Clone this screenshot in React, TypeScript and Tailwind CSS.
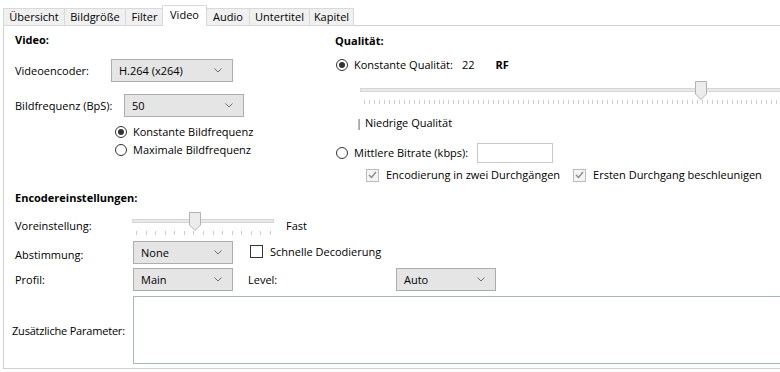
import React from 'react';

const tabs = [
  { label: 'Übersicht', w: 'w-[61px]' },
  { label: 'Bildgröße', w: 'w-[61px]' },
  { label: 'Filter', w: 'w-[38px]' },
  { label: 'Video', w: 'w-[45px]', active: true },
  { label: 'Audio', w: 'w-[43px]' },
  { label: 'Untertitel', w: 'w-[60px]' },
  { label: 'Kapitel', w: 'w-[45px]' },
];

function Chevron() {
  return (
    <svg width="8" height="5" viewBox="0 0 8 5" className="shrink-0">
      <path d="M0.5 0.5 L4 4 L7.5 0.5" fill="none" stroke="#6d6d6d" strokeWidth="1" />
    </svg>
  );
}

function Combo({ value, className }: { value: string; className: string }) {
  return (
    <div
      className={`flex h-[23px] items-center justify-between border border-[#adadad] bg-[#e5e5e5] pl-[7px] pr-[10px] ${className}`}
    >
      <span>{value}</span>
      <Chevron />
    </div>
  );
}

function Radio({ checked, label }: { checked?: boolean; label: string }) {
  return (
    <div className="flex items-center gap-[6px]">
      <span className="flex h-[12px] w-[12px] items-center justify-center rounded-full border border-[#333]">
        {checked && <span className="h-[6px] w-[6px] rounded-full bg-[#333]" />}
      </span>
      <span>{label}</span>
    </div>
  );
}

function Check({ checked, disabled, label }: { checked?: boolean; disabled?: boolean; label: string }) {
  return (
    <div className="flex items-center gap-[7px]">
      <span
        className={`flex h-[13px] w-[13px] items-center justify-center border ${
          disabled ? 'border-[#bcbcbc] bg-[#f4f4f4]' : 'border-[#333] bg-white'
        }`}
      >
        {checked && (
          <svg width="9" height="8" viewBox="0 0 9 8">
            <path d="M1 4 L3.5 6.5 L8 1" fill="none" stroke={disabled ? '#8a8a8a' : '#333'} strokeWidth="1.4" />
          </svg>
        )}
      </span>
      <span>{label}</span>
    </div>
  );
}

function Thumb() {
  return (
    <svg width="12" height="19" viewBox="0 0 12 19">
      <path d="M0.5 0.5 H11.5 V13 L6 18.5 L0.5 13 Z" fill="#ececec" stroke="#b3b3b3" strokeWidth="1" />
    </svg>
  );
}

function Slider({ width, thumbAt, ticks }: { width: number; thumbAt: number; ticks: number }) {
  const step = (width - 8) / (ticks - 1);
  return (
    <div className="relative h-[24px] shrink-0" style={{ width }}>
      <div className="absolute left-0 right-0 top-[7px] h-[4px] border border-[#d6d6d6] bg-[#e7eaea]" />
      <div className="absolute top-0" style={{ left: thumbAt }}>
        <Thumb />
      </div>
      <svg className="absolute left-0 top-[19px]" width={width} height="5">
        {Array.from({ length: ticks }).map((_, i) => (
          <line key={i} x1={4.5 + Math.round(i * step)} x2={4.5 + Math.round(i * step)} y1="0" y2="4" stroke="#cdcdcd" />
        ))}
      </svg>
    </div>
  );
}

export default function App() {
  return (
    <div className="h-[372px] w-[780px] overflow-hidden bg-white font-['Open_Sans',sans-serif] text-[11px] leading-[16px] text-black">
      <div className="relative z-10 flex h-[26px] items-end pl-[3px]">
        {tabs.map((t) =>
          t.active ? (
            <div
              key={t.label}
              className={`-mx-px flex h-[21px] items-center justify-center border border-b-0 border-[#d9d9d9] bg-white pb-[2px] ${t.w}`}
            >
              {t.label}
            </div>
          ) : (
            <div
              key={t.label}
              className={`flex h-[18px] items-center justify-center border border-r-0 border-[#d9d9d9] bg-[#f0f0f0] last:border-r ${t.w}`}
            >
              {t.label}
            </div>
          ),
        )}
      </div>

      <div className="-mt-px ml-[3px] h-[344px] w-[820px] border border-[#cfcfcf] bg-white pl-[11px]">
        <div className="flex h-[158px]">
          {/* Video */}
          <div className="flex w-[320px] shrink-0 flex-col">
            <div className="mt-[6px] h-[16px] font-bold">Video:</div>
            <div className="mt-[11px] flex h-[23px] items-center">
              <span className="w-[96px] shrink-0 pt-[1px]">Videoencoder:</span>
              <Combo value="H.264 (x264)" className="w-[122px]" />
            </div>
            <div className="mt-[12px] flex h-[23px] items-center">
              <span className="w-[109px] shrink-0">Bildfrequenz (BpS):</span>
              <Combo value="50" className="w-[120px]" />
            </div>
            <div className="mt-[5px] flex h-[18px] items-center pl-[100px] pt-[1px]">
              <Radio checked label="Konstante Bildfrequenz" />
            </div>
            <div className="mt-[1px] flex h-[18px] items-center pl-[100px]">
              <Radio label="Maximale Bildfrequenz" />
            </div>
          </div>

          {/* Qualität */}
          <div className="flex flex-col">
            <div className="mt-[7px] h-[16px] font-bold">Qualität:</div>
            <div className="mt-[7px] flex h-[18px] items-center pl-[1px]">
              <Radio checked label="Konstante Qualität:" />
              <span className="ml-[9px]">22</span>
              <span className="ml-[21px] font-bold">RF</span>
            </div>
            <div className="mt-[7px] pl-[25px]">
              <Slider width={460} thumbAt={335} ticks={92} />
            </div>
            <div className="mt-[10px] h-[16px] pl-[21px]">
              <span className="text-[#333]">|</span> Niedrige Qualität
            </div>
            <div className="mt-[12px] flex h-[20px] items-center pl-[1px]">
              <div className="w-[141px] shrink-0">
                <Radio label="Mittlere Bitrate (kbps):" />
              </div>
              <div className="h-[20px] w-[76px] border border-[#c8c8c8] bg-white" />
            </div>
            <div className="mt-[3px] flex h-[18px] items-center gap-[13px] pl-[31px]">
              <Check checked disabled label="Encodierung in zwei Durchgängen" />
              <Check checked disabled label="Ersten Durchgang beschleunigen" />
            </div>
          </div>
        </div>

        {/* Encodereinstellungen */}
        <div className="mt-[6px] h-[16px] font-bold">Encodereinstellungen:</div>
        <div className="mt-[6px] flex h-[24px] items-start">
          <span className="mt-[6px] w-[117px] shrink-0">Voreinstellung:</span>
          <Slider width={142} thumbAt={57} ticks={15} />
          <span className="ml-[12px] mt-[6px]">Fast</span>
        </div>
        <div className="mt-[5px] flex h-[23px] items-center">
          <span className="mt-[4px] w-[118px] shrink-0">Abstimmung:</span>
          <Combo value="None" className="w-[100px]" />
          <div className="ml-[17px] -mt-[2px]">
            <Check label="Schnelle Decodierung" />
          </div>
        </div>
        <div className="mt-[4px] flex h-[23px] items-center">
          <span className="w-[118px] shrink-0">Profil:</span>
          <Combo value="Main" className="w-[100px]" />
          <span className="ml-[15px] w-[148px] shrink-0">Level:</span>
          <Combo value="Auto" className="w-[100px]" />
        </div>
        <div className="mt-[5px] flex h-[68px] items-center">
          <span className="-ml-[3px] w-[121px] shrink-0 pt-[1px] text-[11px] tracking-[-0.2px]">Zusätzliche Parameter:</span>
          <div className="h-[68px] flex-1 border border-[#a9b6c4] bg-white" />
        </div>
      </div>
    </div>
  );
}
